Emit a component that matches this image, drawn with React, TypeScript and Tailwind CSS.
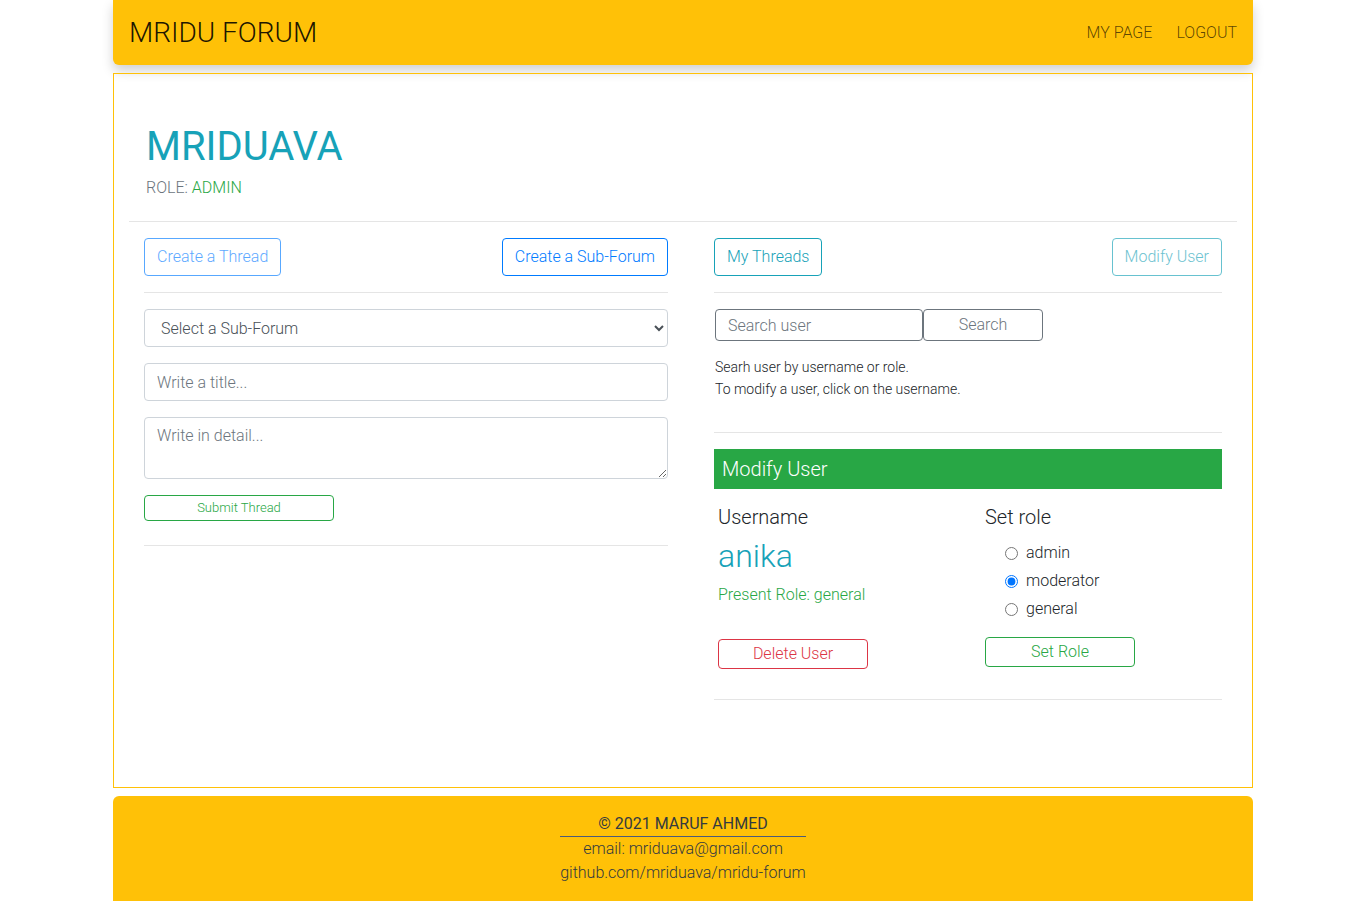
import React from 'react';

const font = { fontFamily: 'Roboto, "Liberation Sans", sans-serif' };

const Navbar: React.FC = () => (
    <nav className="flex items-center justify-between h-[65px] px-4 bg-[#ffc107] rounded-b-md shadow-[0_6px_12px_rgba(0,0,0,0.18)]">
        <span className="text-[28px] font-light text-black/90 leading-none">MRIDU FORUM</span>
        <div className="flex items-center gap-6 text-[16px] font-light text-black/65">
            <a>MY PAGE</a>
            <a>LOGOUT</a>
        </div>
    </nav>
);

const ThreadForm: React.FC = () => (
    <div className="w-[554px] px-[15px]">
        <div className="flex justify-between mt-4">
            <button className="h-[38px] px-3 rounded border border-[#007bff] text-[#007bff] opacity-65 font-light">Create a Thread</button>
            <button className="h-[38px] px-3 rounded border border-[#007bff] text-[#007bff] font-light">Create a Sub-Forum</button>
        </div>
        <hr className="mt-4 border-black/10" />
        <div className="flex flex-col gap-4 mt-4">
            <select className="h-[38px] w-full rounded border border-[#ced4da] pl-3 pr-2 text-[#495057] font-light bg-white">
                <option>Select a Sub-Forum</option>
            </select>
            <input
                className="h-[38px] w-full rounded border border-[#ced4da] px-3 font-light placeholder:text-[#6c757d]"
                placeholder="Write a title..."
            />
            <textarea
                className="h-[62px] w-full rounded border border-[#ced4da] px-3 py-[6px] font-light placeholder:text-[#6c757d]"
                placeholder="Write in detail..."
            />
            <button className="h-[26px] w-[190px] rounded border border-[#28a745] text-[#28a745] text-[13px] font-light">Submit Thread</button>
        </div>
        <hr className="mt-6 border-black/10" />
    </div>
);

const ModifyUser: React.FC = () => (
    <div className="flex-1 pl-[31px] pr-[15px]">
        <div className="flex justify-between mt-4">
            <button className="h-[38px] px-3 rounded border border-[#17a2b8] text-[#17a2b8] font-light">My Threads</button>
            <button className="h-[38px] px-3 rounded border border-[#17a2b8] text-[#17a2b8] opacity-65 font-light">Modify User</button>
        </div>
        <hr className="mt-4 border-black/10" />
        <div className="flex mt-4 ml-px">
            <input
                className="h-8 w-[208px] rounded border border-[#6c757d] px-3 font-light placeholder:text-[#6c757d]"
                placeholder="Search user"
            />
            <button className="h-8 w-[120px] rounded border border-[#6c757d] text-[#6c757d] font-light">Search</button>
        </div>
        <div className="mt-[15px] ml-px text-[14px] leading-[22px] text-[#212529] font-light">
            <p>Searh user by username or role.</p>
            <p>To modify a user, click on the username.</p>
        </div>
        <hr className="mt-8 border-black/10" />
        <div className="mt-4 h-10 bg-[#28a745] text-white text-[20px] font-light flex items-center px-2">Modify User</div>
        <div className="flex mt-[13px]">
            <div className="w-[271px] pl-1">
                <div className="text-[20px] leading-[30px] font-light text-[#212529]">Username</div>
                <div className="text-[32px] leading-[38px] font-light text-[#17a2b8] mt-[5px]">anika</div>
                <div className="text-[16px] leading-6 font-light text-[#28a745] mt-[8px]">Present Role: general</div>
                <button className="mt-[32px] h-[30px] w-[150px] rounded border border-[#dc3545] text-[#dc3545] font-light">Delete User</button>
            </div>
            <div className="flex-1">
                <div className="text-[20px] leading-[30px] font-light text-[#212529]">Set role</div>
                <div className="mt-[7px] pl-5 flex flex-col">
                    {['admin', 'moderator', 'general'].map(r => (
                        <label key={r} className="flex items-center h-7 gap-2 text-[16px] font-light text-[#212529]">
                            <input type="radio" name="role" defaultChecked={r === 'moderator'} className="m-0 w-[13px] h-[13px]" />
                            {r}
                        </label>
                    ))}
                </div>
                <button className="mt-[14px] h-[30px] w-[150px] rounded border border-[#28a745] text-[#28a745] font-light">Set Role</button>
            </div>
        </div>
        <hr className="mt-[30px] border-black/10" />
    </div>
);

const App: React.FC = () => (
    <div style={font} className="w-[1140px] mx-auto text-[#212529]">
        <Navbar />
        <main className="mt-2 h-[715px] border border-[#ffc107] px-[15px]">
            <div className="pt-[49px] pl-[17px]">
                <h1 className="text-[40px] leading-[48px] font-normal text-[#17a2b8]">MRIDUAVA</h1>
                <p className="mt-[5px] text-[16px] leading-6 font-light text-[#6c757d]">
                    ROLE: <span className="text-[#28a745]">ADMIN</span>
                </p>
            </div>
            <hr className="mt-[21px] border-black/10" />
            <div className="flex">
                <ThreadForm />
                <ModifyUser />
            </div>
        </main>
        <footer className="mt-2 h-[106px] bg-[#ffc107] rounded-t-md pt-4 flex justify-center">
            <div className="text-center text-[16px] leading-6 text-[#343a40]">
                <div className="border-b border-[#4c5c7a] font-normal">© 2021 MARUF AHMED</div>
                <div className="font-light">email: mriduava@gmail.com</div>
                <div className="font-light">github.com/mriduava/mridu-forum</div>
            </div>
        </footer>
    </div>
);

export default App;
